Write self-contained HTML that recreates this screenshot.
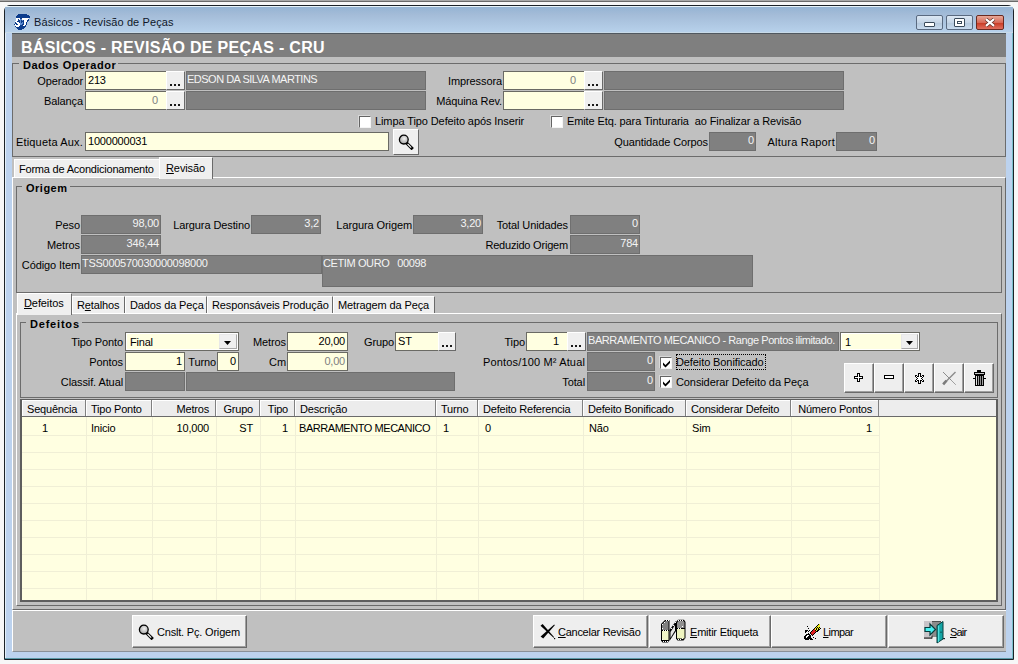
<!DOCTYPE html><html><head><meta charset="utf-8"><style>
*{margin:0;padding:0;box-sizing:border-box}
html,body{width:1018px;height:664px;overflow:hidden;background:#f7f7f7;font-family:"Liberation Sans",sans-serif;font-size:11px;color:#000}
div{position:absolute}
.t{white-space:pre;line-height:13px;letter-spacing:-0.1px}
.cap{font-weight:bold;background:#c0c0c0;padding:0 2px 0 4px;letter-spacing:0.5px}
.inp{background:#ffffe1;border:1px solid #6a6a64;padding:2px 2px 0 2px;white-space:pre;line-height:13px;letter-spacing:-0.2px;overflow:hidden}
.gry{background:#808080;border:1px solid #6e6e6e;border-left-color:#707070;color:#f4f4f4;padding:1px 1px 0 0;white-space:pre;line-height:13px;letter-spacing:-0.2px;overflow:hidden}
.btn3{background:#efefef;border-top:1px solid #fff;border-left:1px solid #fff;border-right:1px solid #696969;border-bottom:1px solid #696969}
.dots{position:absolute;left:3px;top:12px;width:2px;height:2px;background:#1a1a1a;box-shadow:4px 0 0 #1a1a1a,8px 0 0 #1a1a1a}
.cb{background:#fff;border:1px solid #646464;border-right-color:#f4f4f4;border-bottom-color:#f4f4f4;box-shadow:-1px -1px 0 #d8d8d8}
.grp{border:1px solid #6c6c6c}
.btn{background:#eeeeee;border-top:1px solid #fff;border-left:1px solid #fff;border-right:1px solid #6a6a6a;border-bottom:1px solid #6a6a6a;box-shadow:-1px -1px 0 #a0a0a0 inset}
.tab{background:#efefef;border-top:1px solid #fff;border-left:1px solid #fff;border-right:1px solid #6a6a6a}
.sheet{border-top:1px solid #fff;border-left:1px solid #fff;border-right:1px solid #6a6a6a;border-bottom:1px solid #6a6a6a;background:#c0c0c0}
.hd{background:#ececec;border-right:1px solid #808080;box-shadow:inset 1px 1px 0 #fff;padding:3px 6px 0 5px;white-space:pre;line-height:13px;letter-spacing:-0.2px;overflow:hidden}
.cell{white-space:pre;line-height:13px;letter-spacing:-0.2px}
</style></head><body>

<div class="" style="left:0px;top:0px;width:1018px;height:1px;background:#a8a8a8"></div>
<div class="" style="left:0px;top:1px;width:1018px;height:1px;background:#6a6a6a"></div>
<div class="" style="left:4px;top:5px;width:1010px;height:655px;background:#bcd2ee;border:1px solid #1c2228;border-radius:6px 6px 0 0;"></div>
<div class="" style="left:5px;top:33px;width:1px;height:626px;background:#e4f0f8"></div>
<div class="" style="left:1012px;top:33px;width:1px;height:626px;background:#7ac0cc"></div>
<div class="" style="left:5px;top:658px;width:1008px;height:1px;background:#5a9aa8"></div>
<div class="" style="left:5px;top:6px;width:1008px;height:1px;background:#e6f2f8;border-radius:5px 5px 0 0"></div>
<div class="" style="left:5px;top:7px;width:1008px;height:26px;background:linear-gradient(#95b4d4,#a4bcd8 30%,#b8d2ec);"></div>
<div class="" style="left:5px;top:32px;width:1008px;height:1px;background:#c8dae8"></div>
<div class="" style="left:12px;top:33px;width:994px;height:618px;background:#c0c0c0"></div>
<svg style="position:absolute;left:14px;top:14px" width="16" height="16" viewBox="0 0 16 16" shape-rendering="crispEdges"><rect x="4" y="0" width="1" height="1" fill="#0c3c8c"/><rect x="5" y="0" width="1" height="1" fill="#0c3c8c"/><rect x="6" y="0" width="1" height="1" fill="#0c3c8c"/><rect x="7" y="0" width="1" height="1" fill="#0c3c8c"/><rect x="8" y="0" width="1" height="1" fill="#0c3c8c"/><rect x="9" y="0" width="1" height="1" fill="#0c3c8c"/><rect x="10" y="0" width="1" height="1" fill="#0c3c8c"/><rect x="11" y="0" width="1" height="1" fill="#0c3c8c"/><rect x="12" y="0" width="1" height="1" fill="#0c3c8c"/><rect x="3" y="1" width="1" height="1" fill="#0c3c8c"/><rect x="4" y="1" width="1" height="1" fill="#0c3c8c"/><rect x="5" y="1" width="1" height="1" fill="#0c3c8c"/><rect x="6" y="1" width="1" height="1" fill="#0c3c8c"/><rect x="7" y="1" width="1" height="1" fill="#0c3c8c"/><rect x="8" y="1" width="1" height="1" fill="#0c3c8c"/><rect x="9" y="1" width="1" height="1" fill="#0c3c8c"/><rect x="10" y="1" width="1" height="1" fill="#0c3c8c"/><rect x="11" y="1" width="1" height="1" fill="#0c3c8c"/><rect x="12" y="1" width="1" height="1" fill="#0c3c8c"/><rect x="13" y="1" width="1" height="1" fill="#0c3c8c"/><rect x="14" y="1" width="1" height="1" fill="#0c3c8c"/><rect x="2" y="2" width="1" height="1" fill="#0c3c8c"/><rect x="3" y="2" width="1" height="1" fill="#0c3c8c"/><rect x="4" y="2" width="1" height="1" fill="#0c3c8c"/><rect x="5" y="2" width="1" height="1" fill="#0c3c8c"/><rect x="6" y="2" width="1" height="1" fill="#0c3c8c"/><rect x="7" y="2" width="1" height="1" fill="#0c3c8c"/><rect x="8" y="2" width="1" height="1" fill="#0c3c8c"/><rect x="9" y="2" width="1" height="1" fill="#0c3c8c"/><rect x="10" y="2" width="1" height="1" fill="#0c3c8c"/><rect x="11" y="2" width="1" height="1" fill="#0c3c8c"/><rect x="12" y="2" width="1" height="1" fill="#0c3c8c"/><rect x="13" y="2" width="1" height="1" fill="#0c3c8c"/><rect x="14" y="2" width="1" height="1" fill="#0c3c8c"/><rect x="15" y="2" width="1" height="1" fill="#0c3c8c"/><rect x="2" y="3" width="1" height="1" fill="#0c3c8c"/><rect x="3" y="3" width="1" height="1" fill="#0c3c8c"/><rect x="4" y="3" width="1" height="1" fill="#0c3c8c"/><rect x="5" y="3" width="1" height="1" fill="#0c3c8c"/><rect x="6" y="3" width="1" height="1" fill="#0c3c8c"/><rect x="7" y="3" width="1" height="1" fill="#0c3c8c"/><rect x="8" y="3" width="1" height="1" fill="#0c3c8c"/><rect x="9" y="3" width="1" height="1" fill="#0c3c8c"/><rect x="10" y="3" width="1" height="1" fill="#0c3c8c"/><rect x="11" y="3" width="1" height="1" fill="#0c3c8c"/><rect x="12" y="3" width="1" height="1" fill="#0c3c8c"/><rect x="13" y="3" width="1" height="1" fill="#0c3c8c"/><rect x="14" y="3" width="1" height="1" fill="#0c3c8c"/><rect x="15" y="3" width="1" height="1" fill="#0c3c8c"/><rect x="2" y="4" width="1" height="1" fill="#ffffff"/><rect x="3" y="4" width="1" height="1" fill="#ffffff"/><rect x="4" y="4" width="1" height="1" fill="#ffffff"/><rect x="5" y="4" width="1" height="1" fill="#ffffff"/><rect x="6" y="4" width="1" height="1" fill="#0c3c8c"/><rect x="7" y="4" width="1" height="1" fill="#0c3c8c"/><rect x="8" y="4" width="1" height="1" fill="#ffffff"/><rect x="9" y="4" width="1" height="1" fill="#ffffff"/><rect x="10" y="4" width="1" height="1" fill="#ffffff"/><rect x="11" y="4" width="1" height="1" fill="#ffffff"/><rect x="12" y="4" width="1" height="1" fill="#ffffff"/><rect x="13" y="4" width="1" height="1" fill="#ffffff"/><rect x="14" y="4" width="1" height="1" fill="#ffffff"/><rect x="2" y="5" width="1" height="1" fill="#ffffff"/><rect x="3" y="5" width="1" height="1" fill="#ffffff"/><rect x="4" y="5" width="1" height="1" fill="#0c3c8c"/><rect x="5" y="5" width="1" height="1" fill="#ffffff"/><rect x="6" y="5" width="1" height="1" fill="#5a8ad0"/><rect x="7" y="5" width="1" height="1" fill="#5a8ad0"/><rect x="8" y="5" width="1" height="1" fill="#ffffff"/><rect x="9" y="5" width="1" height="1" fill="#ffffff"/><rect x="10" y="5" width="1" height="1" fill="#ffffff"/><rect x="11" y="5" width="1" height="1" fill="#ffffff"/><rect x="12" y="5" width="1" height="1" fill="#ffffff"/><rect x="13" y="5" width="1" height="1" fill="#ffffff"/><rect x="14" y="5" width="1" height="1" fill="#0c3c8c"/><rect x="2" y="6" width="1" height="1" fill="#ffffff"/><rect x="3" y="6" width="1" height="1" fill="#ffffff"/><rect x="4" y="6" width="1" height="1" fill="#0c3c8c"/><rect x="5" y="6" width="1" height="1" fill="#0c3c8c"/><rect x="6" y="6" width="1" height="1" fill="#5a8ad0"/><rect x="7" y="6" width="1" height="1" fill="#0c3c8c"/><rect x="8" y="6" width="1" height="1" fill="#5a8ad0"/><rect x="9" y="6" width="1" height="1" fill="#0c3c8c"/><rect x="10" y="6" width="1" height="1" fill="#ffffff"/><rect x="11" y="6" width="1" height="1" fill="#ffffff"/><rect x="12" y="6" width="1" height="1" fill="#ffffff"/><rect x="13" y="6" width="1" height="1" fill="#0c3c8c"/><rect x="14" y="6" width="1" height="1" fill="#0c3c8c"/><rect x="1" y="7" width="1" height="1" fill="#ffffff"/><rect x="2" y="7" width="1" height="1" fill="#ffffff"/><rect x="3" y="7" width="1" height="1" fill="#0c3c8c"/><rect x="4" y="7" width="1" height="1" fill="#0c3c8c"/><rect x="5" y="7" width="1" height="1" fill="#0c3c8c"/><rect x="6" y="7" width="1" height="1" fill="#5a8ad0"/><rect x="7" y="7" width="1" height="1" fill="#0c3c8c"/><rect x="8" y="7" width="1" height="1" fill="#0c3c8c"/><rect x="9" y="7" width="1" height="1" fill="#0c3c8c"/><rect x="10" y="7" width="1" height="1" fill="#ffffff"/><rect x="11" y="7" width="1" height="1" fill="#ffffff"/><rect x="12" y="7" width="1" height="1" fill="#ffffff"/><rect x="13" y="7" width="1" height="1" fill="#0c3c8c"/><rect x="1" y="8" width="1" height="1" fill="#0c3c8c"/><rect x="2" y="8" width="1" height="1" fill="#ffffff"/><rect x="3" y="8" width="1" height="1" fill="#ffffff"/><rect x="4" y="8" width="1" height="1" fill="#ffffff"/><rect x="5" y="8" width="1" height="1" fill="#0c3c8c"/><rect x="6" y="8" width="1" height="1" fill="#5a8ad0"/><rect x="7" y="8" width="1" height="1" fill="#0c3c8c"/><rect x="8" y="8" width="1" height="1" fill="#5a8ad0"/><rect x="9" y="8" width="1" height="1" fill="#0c3c8c"/><rect x="10" y="8" width="1" height="1" fill="#ffffff"/><rect x="11" y="8" width="1" height="1" fill="#ffffff"/><rect x="12" y="8" width="1" height="1" fill="#0c3c8c"/><rect x="1" y="9" width="1" height="1" fill="#0c3c8c"/><rect x="2" y="9" width="1" height="1" fill="#0c3c8c"/><rect x="3" y="9" width="1" height="1" fill="#ffffff"/><rect x="4" y="9" width="1" height="1" fill="#ffffff"/><rect x="5" y="9" width="1" height="1" fill="#ffffff"/><rect x="6" y="9" width="1" height="1" fill="#5a8ad0"/><rect x="7" y="9" width="1" height="1" fill="#5a8ad0"/><rect x="8" y="9" width="1" height="1" fill="#5a8ad0"/><rect x="9" y="9" width="1" height="1" fill="#0c3c8c"/><rect x="10" y="9" width="1" height="1" fill="#ffffff"/><rect x="11" y="9" width="1" height="1" fill="#ffffff"/><rect x="12" y="9" width="1" height="1" fill="#0c3c8c"/><rect x="0" y="10" width="1" height="1" fill="#0c3c8c"/><rect x="1" y="10" width="1" height="1" fill="#ffffff"/><rect x="2" y="10" width="1" height="1" fill="#0c3c8c"/><rect x="3" y="10" width="1" height="1" fill="#0c3c8c"/><rect x="4" y="10" width="1" height="1" fill="#ffffff"/><rect x="5" y="10" width="1" height="1" fill="#ffffff"/><rect x="6" y="10" width="1" height="1" fill="#5a8ad0"/><rect x="7" y="10" width="1" height="1" fill="#5a8ad0"/><rect x="8" y="10" width="1" height="1" fill="#0c3c8c"/><rect x="9" y="10" width="1" height="1" fill="#0c3c8c"/><rect x="10" y="10" width="1" height="1" fill="#ffffff"/><rect x="11" y="10" width="1" height="1" fill="#ffffff"/><rect x="12" y="10" width="1" height="1" fill="#0c3c8c"/><rect x="1" y="11" width="1" height="1" fill="#ffffff"/><rect x="2" y="11" width="1" height="1" fill="#ffffff"/><rect x="3" y="11" width="1" height="1" fill="#ffffff"/><rect x="4" y="11" width="1" height="1" fill="#ffffff"/><rect x="5" y="11" width="1" height="1" fill="#ffffff"/><rect x="6" y="11" width="1" height="1" fill="#0c3c8c"/><rect x="7" y="11" width="1" height="1" fill="#0c3c8c"/><rect x="8" y="11" width="1" height="1" fill="#0c3c8c"/><rect x="9" y="11" width="1" height="1" fill="#ffffff"/><rect x="10" y="11" width="1" height="1" fill="#ffffff"/><rect x="11" y="11" width="1" height="1" fill="#0c3c8c"/><rect x="1" y="12" width="1" height="1" fill="#0c3c8c"/><rect x="2" y="12" width="1" height="1" fill="#ffffff"/><rect x="3" y="12" width="1" height="1" fill="#ffffff"/><rect x="4" y="12" width="1" height="1" fill="#ffffff"/><rect x="5" y="12" width="1" height="1" fill="#0c3c8c"/><rect x="6" y="12" width="1" height="1" fill="#0c3c8c"/><rect x="7" y="12" width="1" height="1" fill="#0c3c8c"/><rect x="8" y="12" width="1" height="1" fill="#0c3c8c"/><rect x="9" y="12" width="1" height="1" fill="#0c3c8c"/><rect x="10" y="12" width="1" height="1" fill="#0c3c8c"/><rect x="11" y="12" width="1" height="1" fill="#0c3c8c"/><rect x="2" y="13" width="1" height="1" fill="#0c3c8c"/><rect x="3" y="13" width="1" height="1" fill="#0c3c8c"/><rect x="4" y="13" width="1" height="1" fill="#0c3c8c"/><rect x="5" y="13" width="1" height="1" fill="#0c3c8c"/><rect x="6" y="13" width="1" height="1" fill="#0c3c8c"/><rect x="7" y="13" width="1" height="1" fill="#0c3c8c"/><rect x="8" y="13" width="1" height="1" fill="#0c3c8c"/><rect x="9" y="13" width="1" height="1" fill="#0c3c8c"/><rect x="10" y="13" width="1" height="1" fill="#0c3c8c"/><rect x="3" y="14" width="1" height="1" fill="#0c3c8c"/><rect x="4" y="14" width="1" height="1" fill="#0c3c8c"/><rect x="5" y="14" width="1" height="1" fill="#0c3c8c"/><rect x="6" y="14" width="1" height="1" fill="#0c3c8c"/><rect x="7" y="14" width="1" height="1" fill="#0c3c8c"/><rect x="8" y="14" width="1" height="1" fill="#0c3c8c"/><rect x="9" y="14" width="1" height="1" fill="#0c3c8c"/><rect x="4" y="15" width="1" height="1" fill="#0c3c8c"/><rect x="5" y="15" width="1" height="1" fill="#0c3c8c"/><rect x="6" y="15" width="1" height="1" fill="#0c3c8c"/><rect x="7" y="15" width="1" height="1" fill="#0c3c8c"/></svg>
<div class="t" style="left:34px;top:16px;color:#10182a;letter-spacing:0.1px">Básicos - Revisão de Peças</div>
<div style="left:916px;top:15px;width:27px;height:15px;border:1px solid #5a6a80;border-radius:2px;background:linear-gradient(#dce8f4,#c4d4e6 50%,#b4c8dc 51%,#c8daee)"><div style="left:7px;top:6px;width:11px;height:5px;background:#fff;border:1px solid #3a4a5a;border-radius:1px"></div></div>
<div style="left:946px;top:15px;width:27px;height:15px;border:1px solid #5a6a80;border-radius:2px;background:linear-gradient(#dce8f4,#c4d4e6 50%,#b4c8dc 51%,#c8daee)"><div style="left:7px;top:2px;width:11px;height:9px;background:#fff;border:1px solid #3a4a5a;border-radius:1px;box-shadow:inset 0 0 0 2px #fff, inset 0 0 0 3px #3a4a5a"></div></div>
<div style="left:976px;top:15px;width:28px;height:15px;border:1px solid #6a2a20;border-radius:2px;background:linear-gradient(#e8a898,#d86a58 50%,#c83820 51%,#e07060)"><svg style="position:absolute;left:7px;top:2px" width="12" height="9" viewBox="0 0 12 9"><path d="M2 1.2 L10 7.8 M10 1.2 L2 7.8" stroke="#5a2a20" stroke-width="3.6"/><path d="M2 1.2 L10 7.8 M10 1.2 L2 7.8" stroke="#fff" stroke-width="2.2"/></svg></div>
<div class="" style="left:12px;top:33px;width:994px;height:24px;background:#7f7f7f;border-top:1px solid #505860"></div>
<div class="t" style="left:21px;top:40px;color:#fff;font-weight:bold;font-size:16px;line-height:15px;letter-spacing:0.3px">BÁSICOS - REVISÃO DE PEÇAS - CRU</div>
<div class="grp" style="left:12px;top:63px;width:994px;height:94px;"></div>
<div class="t cap" style="left:19px;top:59px;">Dados Operador</div>
<div class="t" style="right:935px;top:75px;">Operador</div>
<div class="inp" style="left:85px;top:71px;width:82px;height:19px;text-align:left;color:#000;">213</div>
<div class="btn3" style="left:166px;top:71px;width:19px;height:19px;"><div class="dots"></div></div>
<div class="gry" style="left:186px;top:71px;width:240px;height:19px;text-align:left;letter-spacing:-0.5px">EDSON DA SILVA MARTINS</div>
<div class="t" style="right:516px;top:75px;">Impressora</div>
<div class="inp" style="left:503px;top:71px;width:82px;height:19px;text-align:right;color:#808080;padding-right:8px">0</div>
<div class="btn3" style="left:584px;top:71px;width:19px;height:19px;"><div class="dots"></div></div>
<div class="gry" style="left:604px;top:71px;width:240px;height:19px;text-align:left;"></div>
<div class="t" style="right:935px;top:95px;">Balança</div>
<div class="inp" style="left:85px;top:91px;width:82px;height:19px;text-align:right;color:#808080;padding-right:8px">0</div>
<div class="btn3" style="left:166px;top:91px;width:19px;height:19px;"><div class="dots"></div></div>
<div class="gry" style="left:186px;top:91px;width:240px;height:19px;text-align:left;"></div>
<div class="t" style="right:516px;top:95px;">Máquina Rev.</div>
<div class="inp" style="left:503px;top:91px;width:82px;height:19px;text-align:left;color:#000;"></div>
<div class="btn3" style="left:584px;top:91px;width:19px;height:19px;"><div class="dots"></div></div>
<div class="gry" style="left:604px;top:91px;width:240px;height:19px;text-align:left;"></div>
<div class="cb" style="left:359px;top:116px;width:12px;height:12px;"></div>
<div class="t" style="left:375px;top:115px;letter-spacing:-0.1px">Limpa Tipo Defeito após Inserir</div>
<div class="cb" style="left:551px;top:116px;width:12px;height:12px;"></div>
<div class="t" style="left:567px;top:115px;letter-spacing:-0.11px">Emite Etq. para Tinturaria  ao Finalizar a Revisão</div>
<div class="t" style="right:935px;top:136px;letter-spacing:0.17px">Etiqueta Aux.</div>
<div class="inp" style="left:85px;top:132px;width:304px;height:19px;text-align:left;color:#000;">1000000031</div>
<div class="btn3" style="left:393px;top:129px;width:26px;height:26px;background:#efefef"></div>
<svg style="position:absolute;left:398px;top:134px" width="16" height="16" viewBox="0 0 16 16"><defs><radialGradient id="mg1" cx="0.55" cy="0.4" r="0.6"><stop offset="0" stop-color="#f4f4f4"/><stop offset="1" stop-color="#a0a0a0"/></radialGradient></defs><path d="M9.2 9.6 L13.6 14" stroke="#000" stroke-width="3.2" stroke-linecap="square"/><path d="M9.6 10 L13.2 13.6" stroke="#fff" stroke-width="1.1"/><circle cx="5.8" cy="5.6" r="4.4" fill="url(#mg1)" stroke="#000" stroke-width="1.3"/></svg>
<div class="t" style="right:310px;top:136px;">Quantidade Corpos</div>
<div class="gry" style="left:709px;top:132px;width:47px;height:19px;text-align:right;">0</div>
<div class="t" style="right:183px;top:136px;letter-spacing:0.2px">Altura Raport</div>
<div class="gry" style="left:836px;top:132px;width:41px;height:19px;text-align:right;">0</div>
<div class="sheet" style="left:12px;top:177px;width:994px;height:433px;"></div>
<div class="tab" style="left:14px;top:159px;width:147px;height:18px;"></div>
<div class="t" style="left:19px;top:163px;letter-spacing:-0.21px">Forma de Acondicionamento</div>
<div class="tab" style="left:159px;top:157px;width:54px;height:22px;border-bottom:none"></div>
<div class="t" style="left:166px;top:162px;"><u>R</u>evisão</div>
<div class="grp" style="left:16px;top:186px;width:986px;height:107px;"></div>
<div class="t cap" style="left:22px;top:182px;">Origem</div>
<div class="t" style="right:938px;top:219px;">Peso</div>
<div class="gry" style="left:81px;top:215px;width:80px;height:19px;text-align:right;">98,00</div>
<div class="t" style="right:938px;top:239px;">Metros</div>
<div class="gry" style="left:81px;top:235px;width:80px;height:19px;text-align:right;">346,44</div>
<div class="t" style="right:938px;top:259px;">Código Item</div>
<div class="gry" style="left:81px;top:255px;width:241px;height:19px;text-align:left;letter-spacing:-0.28px">TSS000570030000098000</div>
<div class="gry" style="left:322px;top:255px;width:431px;height:32px;text-align:left;letter-spacing:-0.39px">CETIM OURO   00098</div>
<div class="t" style="right:768px;top:219px;">Largura Destino</div>
<div class="gry" style="left:251px;top:215px;width:70px;height:19px;text-align:right;">3,2</div>
<div class="t" style="right:606px;top:219px;">Largura Origem</div>
<div class="gry" style="left:413px;top:215px;width:70px;height:19px;text-align:right;">3,20</div>
<div class="t" style="right:450px;top:219px;">Total Unidades</div>
<div class="gry" style="left:570px;top:215px;width:70px;height:19px;text-align:right;">0</div>
<div class="t" style="right:450px;top:239px;letter-spacing:-0.2px">Reduzido Origem</div>
<div class="gry" style="left:570px;top:235px;width:70px;height:19px;text-align:right;">784</div>
<div class="sheet" style="left:16px;top:313px;width:986px;height:293px;"></div>
<div class="tab" style="left:72px;top:296px;width:53px;height:17px;"></div>
<div class="t" style="left:77px;top:299px;letter-spacing:-0.12px">R<u>e</u>talhos</div>
<div class="tab" style="left:125px;top:296px;width:82px;height:17px;"></div>
<div class="t" style="left:130px;top:299px;letter-spacing:-0.12px">Dados da Peça</div>
<div class="tab" style="left:207px;top:296px;width:126px;height:17px;"></div>
<div class="t" style="left:212px;top:299px;letter-spacing:-0.12px">Responsáveis Produção</div>
<div class="tab" style="left:333px;top:296px;width:102px;height:17px;"></div>
<div class="t" style="left:338px;top:299px;letter-spacing:-0.12px">Metragem da Peça</div>
<div class="tab" style="left:17px;top:293px;width:55px;height:22px;border-bottom:none"></div>
<div class="t" style="left:24px;top:297px;"><u>D</u>efeitos</div>
<div class="grp" style="left:20px;top:322px;width:978px;height:76px;"></div>
<div class="t cap" style="left:26px;top:318px;"><span style="letter-spacing:0.8px">Defeitos</span></div>
<div class="t" style="right:895px;top:336px;">Tipo Ponto</div>
<div class="inp" style="left:125px;top:332px;width:114px;height:19px;box-shadow:inset 0 0 0 1px #fff;padding-left:4px;padding-top:3px">Final</div>
<div class="" style="left:219px;top:334px;width:18px;height:15px;background:#efefef;border:1px solid #a8a8a8;border-left-color:#e8e8e8;border-top-color:#e8e8e8"><svg style="position:absolute;left:4px;top:6px" width="7" height="4" viewBox="0 0 7 4"><path d="M0 0 L7 0 L3.5 4Z" fill="#000"/></svg></div>
<div class="t" style="right:732px;top:336px;">Metros</div>
<div class="inp" style="left:287px;top:332px;width:61px;height:19px;text-align:right;color:#000;">20,00</div>
<div class="t" style="right:624px;top:336px;">Grupo</div>
<div class="inp" style="left:395px;top:332px;width:45px;height:19px;text-align:left;color:#000;">ST</div>
<div class="btn3" style="left:438px;top:332px;width:18px;height:19px;"><div class="dots"></div></div>
<div class="t" style="right:493px;top:336px;">Tipo</div>
<div class="inp" style="left:526px;top:332px;width:42px;height:19px;text-align:right;color:#000;padding-right:8px">1</div>
<div class="btn3" style="left:567px;top:332px;width:19px;height:19px;"><div class="dots"></div></div>
<div class="gry" style="left:587px;top:332px;width:252px;height:19px;text-align:left;letter-spacing:-0.42px">BARRAMENTO MECANICO - Range Pontos ilimitado.</div>
<div class="inp" style="left:840px;top:332px;width:80px;height:19px;box-shadow:inset 0 0 0 1px #fff;padding-left:4px;padding-top:3px">1</div>
<div class="" style="left:901px;top:334px;width:17px;height:15px;background:#efefef;border:1px solid #a8a8a8;border-left-color:#e8e8e8;border-top-color:#e8e8e8"><svg style="position:absolute;left:4px;top:6px" width="7" height="4" viewBox="0 0 7 4"><path d="M0 0 L7 0 L3.5 4Z" fill="#000"/></svg></div>
<div class="t" style="right:895px;top:356px;">Pontos</div>
<div class="inp" style="left:125px;top:352px;width:60px;height:19px;text-align:right;color:#000;">1</div>
<div class="t" style="right:802px;top:356px;">Turno</div>
<div class="inp" style="left:217px;top:352px;width:22px;height:19px;text-align:right;color:#000;">0</div>
<div class="t" style="right:732px;top:356px;">Cm</div>
<div class="inp" style="left:287px;top:352px;width:61px;height:19px;text-align:right;color:#808080;">0,00</div>
<div class="t" style="right:433px;top:356px;letter-spacing:0.15px">Pontos/100 M² Atual</div>
<div class="gry" style="left:587px;top:352px;width:68px;height:19px;text-align:right;">0</div>
<div class="cb" style="left:660px;top:357px;width:12px;height:12px;"><svg width="9" height="9" viewBox="0 0 9 9" style="position:absolute;left:1px;top:1px"><path d="M1 3.5 L3.5 6 L8 1.5 L8 4 L3.5 8.5 L1 6 Z" fill="#000"/></svg></div>
<div class="t" style="left:676px;top:356px;">Defeito Bonificado</div>
<div class="" style="left:676px;top:354px;width:90px;height:16px;border:1px dotted #000"></div>
<div class="t" style="right:895px;top:376px;">Classif. Atual</div>
<div class="gry" style="left:125px;top:372px;width:60px;height:19px;text-align:left;"></div>
<div class="gry" style="left:186px;top:372px;width:269px;height:19px;text-align:left;"></div>
<div class="t" style="right:433px;top:376px;">Total</div>
<div class="gry" style="left:587px;top:372px;width:68px;height:19px;text-align:right;">0</div>
<div class="cb" style="left:660px;top:376px;width:12px;height:12px;"><svg width="9" height="9" viewBox="0 0 9 9" style="position:absolute;left:1px;top:1px"><path d="M1 3.5 L3.5 6 L8 1.5 L8 4 L3.5 8.5 L1 6 Z" fill="#000"/></svg></div>
<div class="t" style="left:676px;top:376px;">Considerar Defeito da Peça</div>
<div class="btn" style="left:844px;top:363px;width:30px;height:30px;"><svg style="position:absolute;left:9px;top:9px" width="9" height="9" viewBox="0 0 9 9" shape-rendering="crispEdges"><path d="M3 0H6V3H9V6H6V9H3V6H0V3H3Z" fill="#000"/><path d="M4 1H5V8H4Z M1 4H8V5H1Z" fill="#fff"/></svg></div>
<div class="btn" style="left:874px;top:363px;width:30px;height:30px;"><svg style="position:absolute;left:9px;top:11px" width="10" height="4" viewBox="0 0 10 4" shape-rendering="crispEdges"><rect x="0" y="0" width="10" height="4" fill="#000"/><rect x="1" y="1" width="8" height="2" fill="#fff"/></svg></div>
<div class="btn" style="left:904px;top:363px;width:30px;height:30px;"><svg style="position:absolute;left:10px;top:9px" width="9" height="11" viewBox="0 0 9 11" shape-rendering="crispEdges"><rect x="3" y="0" width="1" height="1" fill="#000"/><rect x="4" y="0" width="1" height="1" fill="#000"/><rect x="5" y="0" width="1" height="1" fill="#000"/><rect x="3" y="1" width="1" height="1" fill="#000"/><rect x="4" y="1" width="1" height="1" fill="#fff"/><rect x="5" y="1" width="1" height="1" fill="#000"/><rect x="0" y="2" width="1" height="1" fill="#000"/><rect x="1" y="2" width="1" height="1" fill="#000"/><rect x="3" y="2" width="1" height="1" fill="#000"/><rect x="4" y="2" width="1" height="1" fill="#fff"/><rect x="5" y="2" width="1" height="1" fill="#000"/><rect x="7" y="2" width="1" height="1" fill="#000"/><rect x="8" y="2" width="1" height="1" fill="#000"/><rect x="0" y="3" width="1" height="1" fill="#000"/><rect x="1" y="3" width="1" height="1" fill="#fff"/><rect x="2" y="3" width="1" height="1" fill="#000"/><rect x="3" y="3" width="1" height="1" fill="#000"/><rect x="4" y="3" width="1" height="1" fill="#fff"/><rect x="5" y="3" width="1" height="1" fill="#000"/><rect x="6" y="3" width="1" height="1" fill="#000"/><rect x="7" y="3" width="1" height="1" fill="#fff"/><rect x="8" y="3" width="1" height="1" fill="#000"/><rect x="1" y="4" width="1" height="1" fill="#000"/><rect x="2" y="4" width="1" height="1" fill="#fff"/><rect x="3" y="4" width="1" height="1" fill="#fff"/><rect x="4" y="4" width="1" height="1" fill="#fff"/><rect x="5" y="4" width="1" height="1" fill="#fff"/><rect x="6" y="4" width="1" height="1" fill="#fff"/><rect x="7" y="4" width="1" height="1" fill="#000"/><rect x="2" y="5" width="1" height="1" fill="#000"/><rect x="3" y="5" width="1" height="1" fill="#fff"/><rect x="4" y="5" width="1" height="1" fill="#fff"/><rect x="5" y="5" width="1" height="1" fill="#fff"/><rect x="6" y="5" width="1" height="1" fill="#000"/><rect x="1" y="6" width="1" height="1" fill="#000"/><rect x="2" y="6" width="1" height="1" fill="#fff"/><rect x="3" y="6" width="1" height="1" fill="#fff"/><rect x="4" y="6" width="1" height="1" fill="#fff"/><rect x="5" y="6" width="1" height="1" fill="#fff"/><rect x="6" y="6" width="1" height="1" fill="#fff"/><rect x="7" y="6" width="1" height="1" fill="#000"/><rect x="0" y="7" width="1" height="1" fill="#000"/><rect x="1" y="7" width="1" height="1" fill="#fff"/><rect x="2" y="7" width="1" height="1" fill="#000"/><rect x="3" y="7" width="1" height="1" fill="#000"/><rect x="4" y="7" width="1" height="1" fill="#fff"/><rect x="5" y="7" width="1" height="1" fill="#000"/><rect x="6" y="7" width="1" height="1" fill="#000"/><rect x="7" y="7" width="1" height="1" fill="#fff"/><rect x="8" y="7" width="1" height="1" fill="#000"/><rect x="0" y="8" width="1" height="1" fill="#000"/><rect x="1" y="8" width="1" height="1" fill="#000"/><rect x="3" y="8" width="1" height="1" fill="#000"/><rect x="4" y="8" width="1" height="1" fill="#fff"/><rect x="5" y="8" width="1" height="1" fill="#000"/><rect x="7" y="8" width="1" height="1" fill="#000"/><rect x="8" y="8" width="1" height="1" fill="#000"/><rect x="3" y="9" width="1" height="1" fill="#000"/><rect x="4" y="9" width="1" height="1" fill="#fff"/><rect x="5" y="9" width="1" height="1" fill="#000"/><rect x="3" y="10" width="1" height="1" fill="#000"/><rect x="4" y="10" width="1" height="1" fill="#000"/><rect x="5" y="10" width="1" height="1" fill="#000"/></svg></div>
<div class="btn" style="left:934px;top:363px;width:30px;height:30px;"><svg style="position:absolute;left:7px;top:7px" width="15" height="15" viewBox="0 0 15 15"><path d="M1 1 L13.5 13.5" stroke="#8c8c8c" stroke-width="1"/><path d="M13.5 1 L1.5 13" stroke="#8c8c8c" stroke-width="1.4"/><path d="M1.2 13.3 L4.5 9.5" stroke="#7c7c7c" stroke-width="2.6"/><path d="M9 9 L13.5 13.5" stroke="#a0a0a0" stroke-width="1"/></svg></div>
<div class="btn" style="left:964px;top:363px;width:30px;height:30px;"><svg style="position:absolute;left:8px;top:6px" width="13" height="16" viewBox="0 0 13 16" shape-rendering="crispEdges"><rect x="4" y="0" width="4" height="2" fill="#000"/><rect x="1" y="2" width="11" height="3" fill="#000"/><rect x="2" y="3" width="9" height="1" fill="#c8c8c8"/><rect x="2" y="5" width="9" height="11" fill="#000"/><rect x="3" y="6" width="1" height="9" fill="#e0e0e0"/><rect x="5" y="6" width="1" height="9" fill="#a0a0a0"/><rect x="7" y="6" width="1" height="9" fill="#909090"/><rect x="9" y="6" width="1" height="9" fill="#a0a0a0"/><rect x="0" y="8" width="2" height="1" fill="#000"/><rect x="11" y="8" width="2" height="1" fill="#000"/></svg></div>
<div class="" style="left:20px;top:399px;width:978px;height:203px;background:#ffffe1;border:2px solid #5e5e5e;border-top-width:1px"></div>
<div class="hd" style="left:22px;top:400px;width:64px;height:16px;text-align:left">Sequência</div>
<div class="hd" style="left:86px;top:400px;width:66px;height:16px;text-align:left">Tipo Ponto</div>
<div class="hd" style="left:152px;top:400px;width:64px;height:16px;text-align:right">Metros</div>
<div class="hd" style="left:216px;top:400px;width:44px;height:16px;text-align:right">Grupo</div>
<div class="hd" style="left:260px;top:400px;width:35px;height:16px;text-align:right">Tipo</div>
<div class="hd" style="left:295px;top:400px;width:141px;height:16px;text-align:left">Descrição</div>
<div class="hd" style="left:436px;top:400px;width:42px;height:16px;text-align:left">Turno</div>
<div class="hd" style="left:478px;top:400px;width:105px;height:16px;text-align:left">Defeito Referencia</div>
<div class="hd" style="left:583px;top:400px;width:103px;height:16px;text-align:left">Defeito Bonificado</div>
<div class="hd" style="left:686px;top:400px;width:105px;height:16px;text-align:left">Considerar Defeito</div>
<div class="hd" style="left:791px;top:400px;width:88px;height:16px;text-align:right">Número Pontos</div>
<div class="" style="left:879px;top:400px;width:117px;height:16px;background:#ededed"></div>
<div class="" style="left:22px;top:416px;width:974px;height:1px;background:#6a6a6a"></div>
<div class="" style="left:22px;top:435px;width:857px;height:1px;background:#f0efd6"></div>
<div class="" style="left:22px;top:452px;width:857px;height:1px;background:#f0efd6"></div>
<div class="" style="left:22px;top:469px;width:857px;height:1px;background:#f0efd6"></div>
<div class="" style="left:22px;top:486px;width:857px;height:1px;background:#f0efd6"></div>
<div class="" style="left:22px;top:503px;width:857px;height:1px;background:#f0efd6"></div>
<div class="" style="left:22px;top:520px;width:857px;height:1px;background:#f0efd6"></div>
<div class="" style="left:22px;top:537px;width:857px;height:1px;background:#f0efd6"></div>
<div class="" style="left:22px;top:554px;width:857px;height:1px;background:#f0efd6"></div>
<div class="" style="left:22px;top:571px;width:857px;height:1px;background:#f0efd6"></div>
<div class="" style="left:22px;top:588px;width:857px;height:1px;background:#f0efd6"></div>
<div class="" style="left:86px;top:417px;width:1px;height:183px;background:#f0efd6"></div>
<div class="" style="left:152px;top:417px;width:1px;height:183px;background:#f0efd6"></div>
<div class="" style="left:216px;top:417px;width:1px;height:183px;background:#f0efd6"></div>
<div class="" style="left:260px;top:417px;width:1px;height:183px;background:#f0efd6"></div>
<div class="" style="left:295px;top:417px;width:1px;height:183px;background:#f0efd6"></div>
<div class="" style="left:436px;top:417px;width:1px;height:183px;background:#f0efd6"></div>
<div class="" style="left:478px;top:417px;width:1px;height:183px;background:#f0efd6"></div>
<div class="" style="left:583px;top:417px;width:1px;height:183px;background:#f0efd6"></div>
<div class="" style="left:686px;top:417px;width:1px;height:183px;background:#f0efd6"></div>
<div class="" style="left:791px;top:417px;width:1px;height:183px;background:#f0efd6"></div>
<div class="" style="left:879px;top:417px;width:1px;height:183px;background:#f0efd6"></div>
<div class="cell" style="left:42px;top:422px;width:38px;height:13px;">1</div>
<div class="cell" style="left:91px;top:422px;width:55px;height:13px;">Inicio</div>
<div class="cell" style="left:156px;top:422px;width:53px;height:13px;text-align:right">10,000</div>
<div class="cell" style="left:220px;top:422px;width:33px;height:13px;text-align:right">ST</div>
<div class="cell" style="left:264px;top:422px;width:24px;height:13px;text-align:right">1</div>
<div class="cell" style="left:299px;top:422px;width:131px;height:13px;"><span style="letter-spacing:-0.45px">BARRAMENTO MECANICO</span></div>
<div class="cell" style="left:443px;top:422px;width:29px;height:13px;">1</div>
<div class="cell" style="left:485px;top:422px;width:92px;height:13px;">0</div>
<div class="cell" style="left:589px;top:422px;width:91px;height:13px;">Não</div>
<div class="cell" style="left:692px;top:422px;width:93px;height:13px;">Sim</div>
<div class="cell" style="left:795px;top:422px;width:77px;height:13px;text-align:right">1</div>
<div class="" style="left:12px;top:610px;width:994px;height:42px;border-top:1px solid #fff;border-left:1px solid #fff;border-bottom:1px solid #8a9098;background:#c0c0c0"></div>
<div class="btn" style="left:132px;top:615px;width:115px;height:33px;"></div>
<div class="btn" style="left:533px;top:615px;width:115px;height:33px;"></div>
<div class="btn" style="left:649px;top:615px;width:122px;height:33px;"></div>
<div class="btn" style="left:771px;top:615px;width:116px;height:33px;"></div>
<div class="btn" style="left:888px;top:615px;width:116px;height:33px;"></div>
<div class="t" style="left:157px;top:626px;letter-spacing:-0.19px">Cnslt. Pç. Origem</div>
<div class="t" style="left:558px;top:626px;letter-spacing:-0.27px"><u>C</u>ancelar Revisão</div>
<div class="t" style="left:690px;top:626px;letter-spacing:-0.22px"><u>E</u>mitir Etiqueta</div>
<div class="t" style="left:823px;top:626px;letter-spacing:-0.6px"><u>L</u>impar</div>
<div class="t" style="left:950px;top:626px;letter-spacing:-0.8px"><u>S</u>air</div>
<svg style="position:absolute;left:138px;top:624px" width="16" height="16" viewBox="0 0 16 16"><defs><radialGradient id="mg2" cx="0.55" cy="0.4" r="0.6"><stop offset="0" stop-color="#f4f4f4"/><stop offset="1" stop-color="#a0a0a0"/></radialGradient></defs><path d="M9.2 9.6 L13.6 14" stroke="#000" stroke-width="3.2" stroke-linecap="square"/><path d="M9.6 10 L13.2 13.6" stroke="#fff" stroke-width="1.1"/><circle cx="5.8" cy="5.6" r="4.4" fill="url(#mg2)" stroke="#000" stroke-width="1.3"/></svg>
<svg style="position:absolute;left:540px;top:624px" width="16" height="16" viewBox="0 0 16 16"><path d="M0.5 1.8 L2.6 0 L14.2 13.2 L13.6 13.8 Z" fill="#000"/><path d="M14.2 0.6 L14.8 1.2 L3.2 14.4 L0.6 12.6 Z" fill="#000"/><rect x="14" y="14" width="1.2" height="1.2" fill="#000"/></svg>
<svg style="position:absolute;left:658px;top:618px" width="30" height="26" viewBox="0 0 30 26">
<path d="M3 6 L7 2 H11.5 V22 L10 24.5 H4.5 L3 22.5 Z" fill="#000"/>
<path d="M4 6.5 L7.5 3 H10.5 V12 H4 Z" fill="#808080"/><rect x="4" y="13" width="6.5" height="9" fill="#f0f4c8"/>
<path d="M18 4 L20 1.8 H26 L27.5 4 V20 L25.5 22.5 H19.5 L18 20.5 Z" fill="#000"/>
<path d="M19 4.5 L20.5 3 H25.5 L26.5 4.5 V10 H19 Z" fill="#909090"/><rect x="19" y="11" width="7.5" height="9.5" fill="#eef4c0"/>
<path d="M11.5 12 L18 3 V13 L11.5 23 Z" fill="#000"/><path d="M12.5 14 L17 7 V12.5 L12.5 20 Z" fill="#e4e4e4"/>
<g fill="#fff" shape-rendering="crispEdges">
<rect x="8" y="2" width="1" height="1"/><rect x="10" y="2" width="1" height="1"/><rect x="6" y="4" width="1" height="1"/><rect x="4" y="6" width="1" height="1"/>
<rect x="4" y="10" width="1" height="1"/><rect x="5" y="12" width="1" height="1"/><rect x="7" y="12" width="1" height="1"/><rect x="9" y="12" width="1" height="1"/>
<rect x="5" y="23" width="1" height="1"/><rect x="7" y="23" width="1" height="1"/><rect x="9" y="23" width="1" height="1"/><rect x="4" y="21" width="1" height="1"/>
<rect x="20" y="2" width="1" height="1"/><rect x="22" y="2" width="1" height="1"/><rect x="24" y="2" width="1" height="1"/>
<rect x="20" y="10" width="1" height="1"/><rect x="22" y="10" width="1" height="1"/><rect x="24" y="8" width="1" height="1"/>
<rect x="20" y="21" width="1" height="1"/><rect x="22" y="21" width="1" height="1"/><rect x="24" y="20" width="1" height="1"/>
<rect x="13" y="10" width="1" height="1"/><rect x="15" y="7" width="1" height="1"/><rect x="17" y="4" width="1" height="1"/>
<rect x="13" y="21" width="1" height="1"/><rect x="15" y="18" width="1" height="1"/><rect x="17" y="15" width="1" height="1"/>
</g></svg>
<svg style="position:absolute;left:804px;top:624px" width="17" height="16" viewBox="0 0 17 16" shape-rendering="crispEdges"><rect x="14" y="0" width="1" height="1" fill="#000"/><rect x="15" y="0" width="1" height="1" fill="#f0f020"/><rect x="13" y="1" width="1" height="1" fill="#000"/><rect x="14" y="1" width="1" height="1" fill="#f0f020"/><rect x="15" y="1" width="1" height="1" fill="#f0f020"/><rect x="3" y="2" width="1" height="1" fill="#000"/><rect x="12" y="2" width="1" height="1" fill="#000"/><rect x="13" y="2" width="1" height="1" fill="#f0f020"/><rect x="14" y="2" width="1" height="1" fill="#f0f020"/><rect x="15" y="2" width="1" height="1" fill="#f0f020"/><rect x="11" y="3" width="1" height="1" fill="#000"/><rect x="12" y="3" width="1" height="1" fill="#f0f020"/><rect x="13" y="3" width="1" height="1" fill="#000"/><rect x="14" y="3" width="1" height="1" fill="#f0f020"/><rect x="15" y="3" width="1" height="1" fill="#000"/><rect x="4" y="4" width="1" height="1" fill="#000"/><rect x="10" y="4" width="1" height="1" fill="#000"/><rect x="11" y="4" width="1" height="1" fill="#f0f020"/><rect x="12" y="4" width="1" height="1" fill="#000"/><rect x="13" y="4" width="1" height="1" fill="#f0f020"/><rect x="14" y="4" width="1" height="1" fill="#000"/><rect x="15" y="4" width="1" height="1" fill="#f0f020"/><rect x="16" y="4" width="1" height="1" fill="#000"/><rect x="9" y="5" width="1" height="1" fill="#000"/><rect x="10" y="5" width="1" height="1" fill="#e02020"/><rect x="11" y="5" width="1" height="1" fill="#f0f020"/><rect x="12" y="5" width="1" height="1" fill="#000"/><rect x="13" y="5" width="1" height="1" fill="#f0f020"/><rect x="14" y="5" width="1" height="1" fill="#000"/><rect x="15" y="5" width="1" height="1" fill="#000"/><rect x="1" y="6" width="1" height="1" fill="#000"/><rect x="2" y="6" width="1" height="1" fill="#000"/><rect x="3" y="6" width="1" height="1" fill="#000"/><rect x="5" y="6" width="1" height="1" fill="#000"/><rect x="8" y="6" width="1" height="1" fill="#000"/><rect x="9" y="6" width="1" height="1" fill="#e02020"/><rect x="10" y="6" width="1" height="1" fill="#e02020"/><rect x="11" y="6" width="1" height="1" fill="#000"/><rect x="12" y="6" width="1" height="1" fill="#f0f020"/><rect x="13" y="6" width="1" height="1" fill="#000"/><rect x="14" y="6" width="1" height="1" fill="#000"/><rect x="1" y="7" width="1" height="1" fill="#000"/><rect x="2" y="7" width="1" height="1" fill="#000"/><rect x="4" y="7" width="1" height="1" fill="#000"/><rect x="7" y="7" width="1" height="1" fill="#000"/><rect x="8" y="7" width="1" height="1" fill="#e02020"/><rect x="9" y="7" width="1" height="1" fill="#e02020"/><rect x="10" y="7" width="1" height="1" fill="#e02020"/><rect x="11" y="7" width="1" height="1" fill="#e02020"/><rect x="12" y="7" width="1" height="1" fill="#000"/><rect x="13" y="7" width="1" height="1" fill="#000"/><rect x="1" y="8" width="1" height="1" fill="#000"/><rect x="6" y="8" width="1" height="1" fill="#000"/><rect x="7" y="8" width="1" height="1" fill="#e02020"/><rect x="8" y="8" width="1" height="1" fill="#e02020"/><rect x="9" y="8" width="1" height="1" fill="#e02020"/><rect x="10" y="8" width="1" height="1" fill="#e02020"/><rect x="11" y="8" width="1" height="1" fill="#000"/><rect x="4" y="9" width="1" height="1" fill="#000"/><rect x="6" y="9" width="1" height="1" fill="#000"/><rect x="7" y="9" width="1" height="1" fill="#e02020"/><rect x="8" y="9" width="1" height="1" fill="#e02020"/><rect x="9" y="9" width="1" height="1" fill="#e02020"/><rect x="10" y="9" width="1" height="1" fill="#000"/><rect x="2" y="10" width="1" height="1" fill="#000"/><rect x="3" y="10" width="1" height="1" fill="#000"/><rect x="4" y="10" width="1" height="1" fill="#000"/><rect x="5" y="10" width="1" height="1" fill="#000"/><rect x="7" y="10" width="1" height="1" fill="#000"/><rect x="8" y="10" width="1" height="1" fill="#e02020"/><rect x="9" y="10" width="1" height="1" fill="#000"/><rect x="1" y="11" width="1" height="1" fill="#000"/><rect x="2" y="11" width="1" height="1" fill="#000"/><rect x="3" y="11" width="1" height="1" fill="#fff"/><rect x="4" y="11" width="1" height="1" fill="#fff"/><rect x="5" y="11" width="1" height="1" fill="#000"/><rect x="6" y="11" width="1" height="1" fill="#000"/><rect x="8" y="11" width="1" height="1" fill="#000"/><rect x="0" y="12" width="1" height="1" fill="#000"/><rect x="1" y="12" width="1" height="1" fill="#000"/><rect x="2" y="12" width="1" height="1" fill="#fff"/><rect x="3" y="12" width="1" height="1" fill="#fff"/><rect x="4" y="12" width="1" height="1" fill="#000"/><rect x="5" y="12" width="1" height="1" fill="#000"/><rect x="6" y="12" width="1" height="1" fill="#000"/><rect x="0" y="13" width="1" height="1" fill="#000"/><rect x="1" y="13" width="1" height="1" fill="#000"/><rect x="2" y="13" width="1" height="1" fill="#fff"/><rect x="3" y="13" width="1" height="1" fill="#000"/><rect x="4" y="13" width="1" height="1" fill="#000"/><rect x="5" y="13" width="1" height="1" fill="#000"/><rect x="6" y="13" width="1" height="1" fill="#000"/><rect x="9" y="13" width="1" height="1" fill="#000"/><rect x="0" y="14" width="1" height="1" fill="#000"/><rect x="1" y="14" width="1" height="1" fill="#000"/><rect x="2" y="14" width="1" height="1" fill="#000"/><rect x="3" y="14" width="1" height="1" fill="#000"/><rect x="4" y="14" width="1" height="1" fill="#000"/><rect x="5" y="14" width="1" height="1" fill="#000"/><rect x="6" y="14" width="1" height="1" fill="#000"/><rect x="7" y="14" width="1" height="1" fill="#000"/><rect x="11" y="14" width="1" height="1" fill="#000"/><rect x="1" y="15" width="1" height="1" fill="#000"/><rect x="2" y="15" width="1" height="1" fill="#000"/><rect x="3" y="15" width="1" height="1" fill="#000"/><rect x="4" y="15" width="1" height="1" fill="#000"/><rect x="6" y="15" width="1" height="1" fill="#000"/><rect x="7" y="15" width="1" height="1" fill="#000"/><rect x="8" y="15" width="1" height="1" fill="#000"/></svg>
<svg style="position:absolute;left:922px;top:618px" width="26" height="26" viewBox="0 0 26 26">
<rect x="2" y="3" width="8" height="17" fill="#c8c4c8"/><rect x="10" y="3" width="9" height="16" fill="#8c8c8c"/><rect x="10" y="3" width="9" height="1" fill="#505050"/>
<rect x="2" y="19.5" width="8" height="1.2" fill="#202020"/><rect x="9.5" y="17.5" width="1" height="3" fill="#202020"/><rect x="20" y="20" width="3" height="1.2" fill="#202020"/>
<path d="M15 7.5 L21 3.5 V21 L15 25 Z" fill="#14a4a4" stroke="#063c3c" stroke-width="1"/>
<path d="M16 8 L17.2 7.3 V23.5 L16 24 Z" fill="#50e0e0"/><rect x="18.5" y="13.5" width="1" height="1.5" fill="#063c3c"/>
<path d="M3 9.5 H8 V6 L13.5 11.5 L8 17 V13.5 H3 Z" fill="#48f0f0" stroke="#063c3c" stroke-width="1.2"/>
</svg>
</body></html>
